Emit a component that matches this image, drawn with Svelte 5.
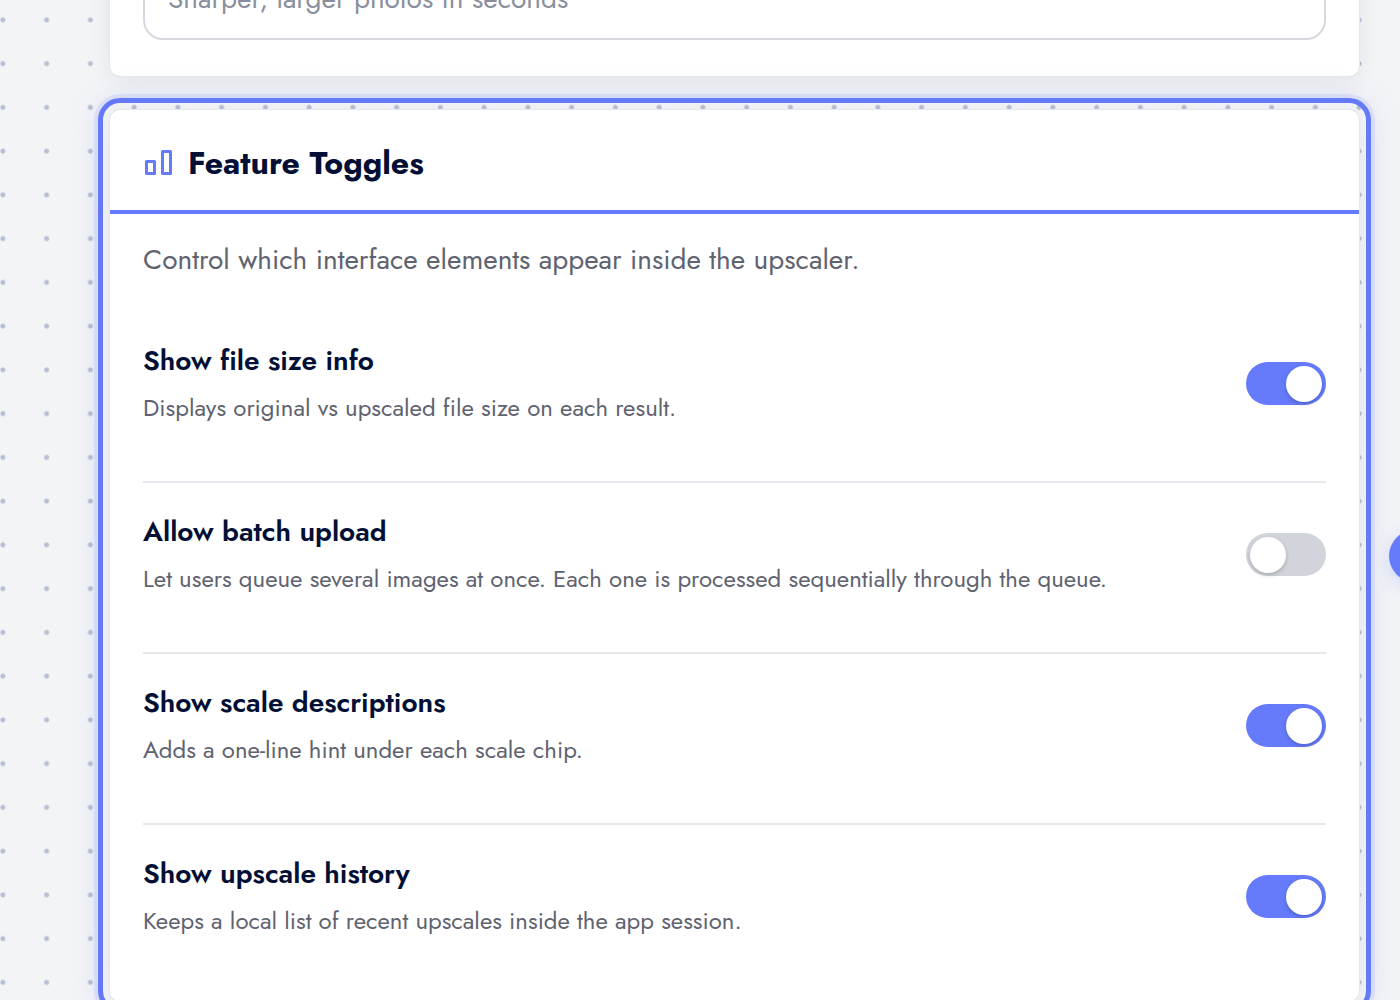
<script>
  let tagline = $state('Sharper, larger photos in seconds')

  let toggles = $state([
    {
      id: 'file-size',
      label: 'Show file size info',
      hint: 'Displays original vs upscaled file size on each result.',
      on: true
    },
    {
      id: 'batch-upload',
      label: 'Allow batch upload',
      hint: 'Let users queue several images at once. Each one is processed sequentially through the queue.',
      on: false
    },
    {
      id: 'scale-descriptions',
      label: 'Show scale descriptions',
      hint: 'Adds a one-line hint under each scale chip.',
      on: true
    },
    {
      id: 'history',
      label: 'Show upscale history',
      hint: 'Keeps a local list of recent upscales inside the app session.',
      on: true
    }
  ])
</script>

<main class="canvas">
  <div class="panels">
    <section class="card card--tagline">
      <input class="field" type="text" aria-label="Tagline" bind:value={tagline} />
    </section>

    <div class="selected">
      <section class="card">
        <header class="card__header">
          <svg class="card__icon" viewBox="0 0 28 26" aria-hidden="true">
            <rect x="1.5" y="11.5" width="8" height="12" />
            <rect x="17.5" y="1.5" width="8" height="22" />
          </svg>
          <h2>Feature Toggles</h2>
        </header>

        <div class="card__body">
          <p class="intro">Control which interface elements appear inside the upscaler.</p>

          {#each toggles as toggle (toggle.id)}
            <div class="row">
              <div class="row__text">
                <label for={toggle.id}>{toggle.label}</label>
                <p id="{toggle.id}-hint">{toggle.hint}</p>
              </div>
              <input
                class="switch"
                type="checkbox"
                role="switch"
                id={toggle.id}
                aria-describedby="{toggle.id}-hint"
                bind:checked={toggle.on}
              />
            </div>
          {/each}
        </div>
      </section>
    </div>
  </div>

  <button class="handle" type="button" aria-label="Next"></button>
</main>

<style>
  :global(body) {
    margin: 0;
  }

  .canvas {
    position: relative;
    box-sizing: border-box;
    height: 100vh;
    overflow: hidden;
    padding: 0 29px 0 98px;
    font-family: Jost, Lato, sans-serif;
    color: #030f35;
    background-color: #f3f4f6;
    background-image: radial-gradient(circle, #b6c0d3 2px, transparent 3px);
    background-size: 3.125vw 3.125vw;
    background-position: -19px -2px;
  }

  /* scrolled so that the first card is cut by the top edge */
  .panels {
    margin-top: -80px;
  }

  .card {
    border-radius: 10px;
    background: #fff;
    box-shadow: 0 0 0 1px #e4e7ec, 0 4px 24px rgba(15, 23, 42, .07);
  }
  .card--tagline {
    margin: 0 12px 22px;
    padding: 36px 33px;
  }

  .field {
    display: block;
    box-sizing: border-box;
    width: 100%;
    height: 84px;
    padding: 0 23px;
    border: 2px solid #d5d8de;
    border-radius: 20px;
    background: #fff;
    font-family: inherit;
    font-size: 28px;
    color: #8a8f9d;
  }

  .selected {
    padding: 7px;
    border: 5px solid #667bfb;
    border-radius: 22px;
    box-shadow: 0 0 0 4px rgba(102, 123, 251, .12), 0 0 32px rgba(102, 123, 251, .14);
  }

  .card__header {
    display: flex;
    align-items: center;
    gap: 15px;
    height: 95px;
    padding: 5px 35px 0;
    border-bottom: 4px solid #667bfb;
  }
  .card__header h2 {
    margin: 0;
    font-size: 32px;
    line-height: 40px;
    font-weight: 700;
  }
  .card__icon {
    width: 28px;
    height: 26px;
    fill: none;
    stroke: #667bfb;
    stroke-width: 3;
    stroke-linejoin: round;
  }

  .card__body {
    padding: 26px 33px 7px;
  }
  .intro {
    margin: 0 0 32px;
    font-size: 28px;
    line-height: 40px;
    color: #60636f;
  }

  .row {
    display: flex;
    align-items: center;
    justify-content: space-between;
    gap: 32px;
    padding: 29px 0 55px;
    border-bottom: 2px solid #e5e8ec;
  }
  .row:last-child {
    border-bottom: 0;
  }
  .row__text label {
    display: block;
    margin-bottom: 8px;
    font-size: 28px;
    line-height: 40px;
    font-weight: 600;
  }
  .row__text p {
    margin: 0;
    font-size: 24px;
    line-height: 37px;
    color: #60636f;
  }

  .switch {
    appearance: none;
    flex: none;
    display: flex;
    align-items: center;
    box-sizing: border-box;
    width: 80px;
    height: 43px;
    margin: 0;
    padding: 0 4px;
    border-radius: 22px;
    background: #d1d5db;
    cursor: pointer;
    transition: background-color .2s ease;
  }
  .switch::before {
    content: '';
    width: 36px;
    height: 36px;
    border-radius: 50%;
    background: #fff;
    box-shadow: 0 2px 4px rgba(0, 0, 0, .2);
  }
  .switch:checked {
    justify-content: flex-end;
    background: #667bfb;
  }

  .handle {
    position: absolute;
    top: 530px;
    right: -41px;
    width: 52px;
    height: 52px;
    border: 0;
    border-radius: 50%;
    background: #667bfb;
    box-shadow: 0 4px 16px rgba(102, 123, 251, .25);
  }
</style>
